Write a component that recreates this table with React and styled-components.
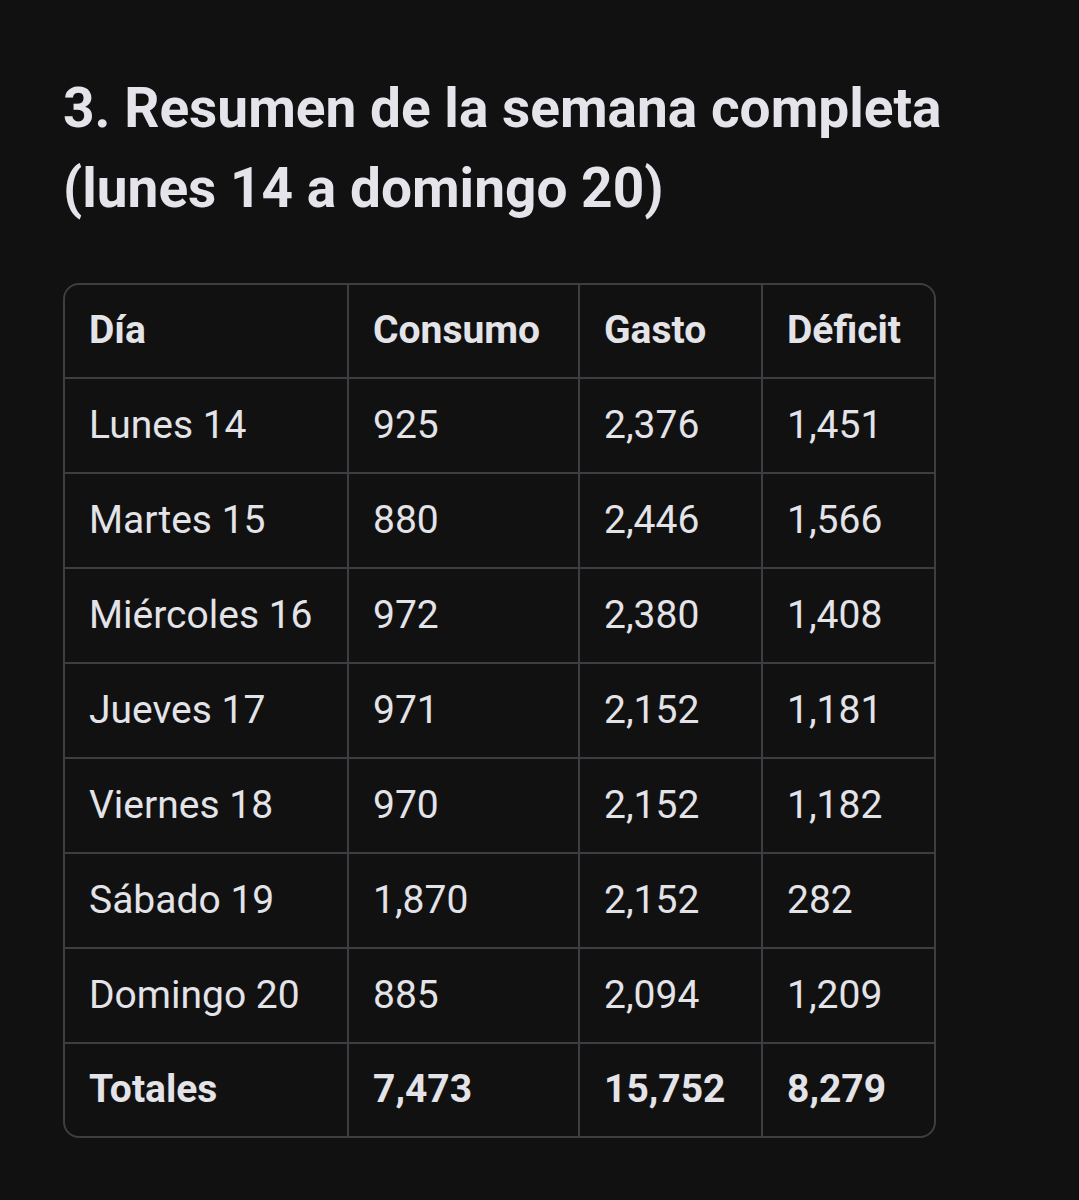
import React from 'react';
import styled, { createGlobalStyle } from 'styled-components';

const GlobalStyle = createGlobalStyle`
  html, body {
    margin: 0;
    padding: 0;
    background-color: #111112;
  }
  body {
    font-family: Roboto, "Noto Sans", "Liberation Sans", sans-serif;
    color: #e3e3e8;
  }
`;

const Page = styled.div`
  min-height: 1200px;
  padding: 68px 63px 0;
  box-sizing: border-box;
`;

const Heading = styled.h2`
  margin: 0 0 55px;
  font-size: 55px;
  line-height: 80px;
  font-weight: 700;
  color: #e4e4ea;
`;

const TableWrap = styled.div`
  width: 873px;
  box-sizing: border-box;
  border: 2px solid #3e3e42;
  border-radius: 16px;
  overflow: hidden;
`;

const Table = styled.table`
  width: 100%;
  border-collapse: collapse;
  table-layout: fixed;
`;

const Cell = styled.td`
  height: ${(p) => (p.$short ? 93 : 95)}px;
  padding: 0 24px 2px;
  box-sizing: border-box;
  font-size: 39px;
  font-weight: ${(p) => (p.$bold ? 700 : 400)};
  color: #e3e3e8;
  border-right: 2px solid #3e3e42;
  border-bottom: 2px solid #3e3e42;
  white-space: nowrap;
  vertical-align: middle;

  &:last-child {
    border-right: none;
  }
  tbody tr:last-child > & {
    border-bottom: none;
  }
`;

const HeadCell = styled(Cell).attrs({ as: 'th', $short: true })`
  text-align: left;
  font-weight: 700;
`;

const rows = [
  ['Lunes 14', '925', '2,376', '1,451'],
  ['Martes 15', '880', '2,446', '1,566'],
  ['Miércoles 16', '972', '2,380', '1,408'],
  ['Jueves 17', '971', '2,152', '1,181'],
  ['Viernes 18', '970', '2,152', '1,182'],
  ['Sábado 19', '1,870', '2,152', '282'],
  ['Domingo 20', '885', '2,094', '1,209'],
];

const totals = ['Totales', '7,473', '15,752', '8,279'];

export default function App() {
  return (
    <Page>
      <GlobalStyle />
      <Heading>
        3. Resumen de la semana completa
        <br />
        (lunes 14 a domingo 20)
      </Heading>
      <TableWrap>
        <Table>
          <colgroup>
            <col style={{ width: '283px' }} />
            <col style={{ width: '231px' }} />
            <col style={{ width: '183px' }} />
            <col />
          </colgroup>
          <thead>
            <tr>
              <HeadCell>Día</HeadCell>
              <HeadCell>Consumo</HeadCell>
              <HeadCell>Gasto</HeadCell>
              <HeadCell>Déficit</HeadCell>
            </tr>
          </thead>
          <tbody>
            {rows.map((r) => (
              <tr key={r[0]}>
                {r.map((c, i) => (
                  <Cell key={i}>{c}</Cell>
                ))}
              </tr>
            ))}
            <tr>
              {totals.map((c, i) => (
                <Cell key={i} $bold $short>
                  {c}
                </Cell>
              ))}
            </tr>
          </tbody>
        </Table>
      </TableWrap>
    </Page>
  );
}
